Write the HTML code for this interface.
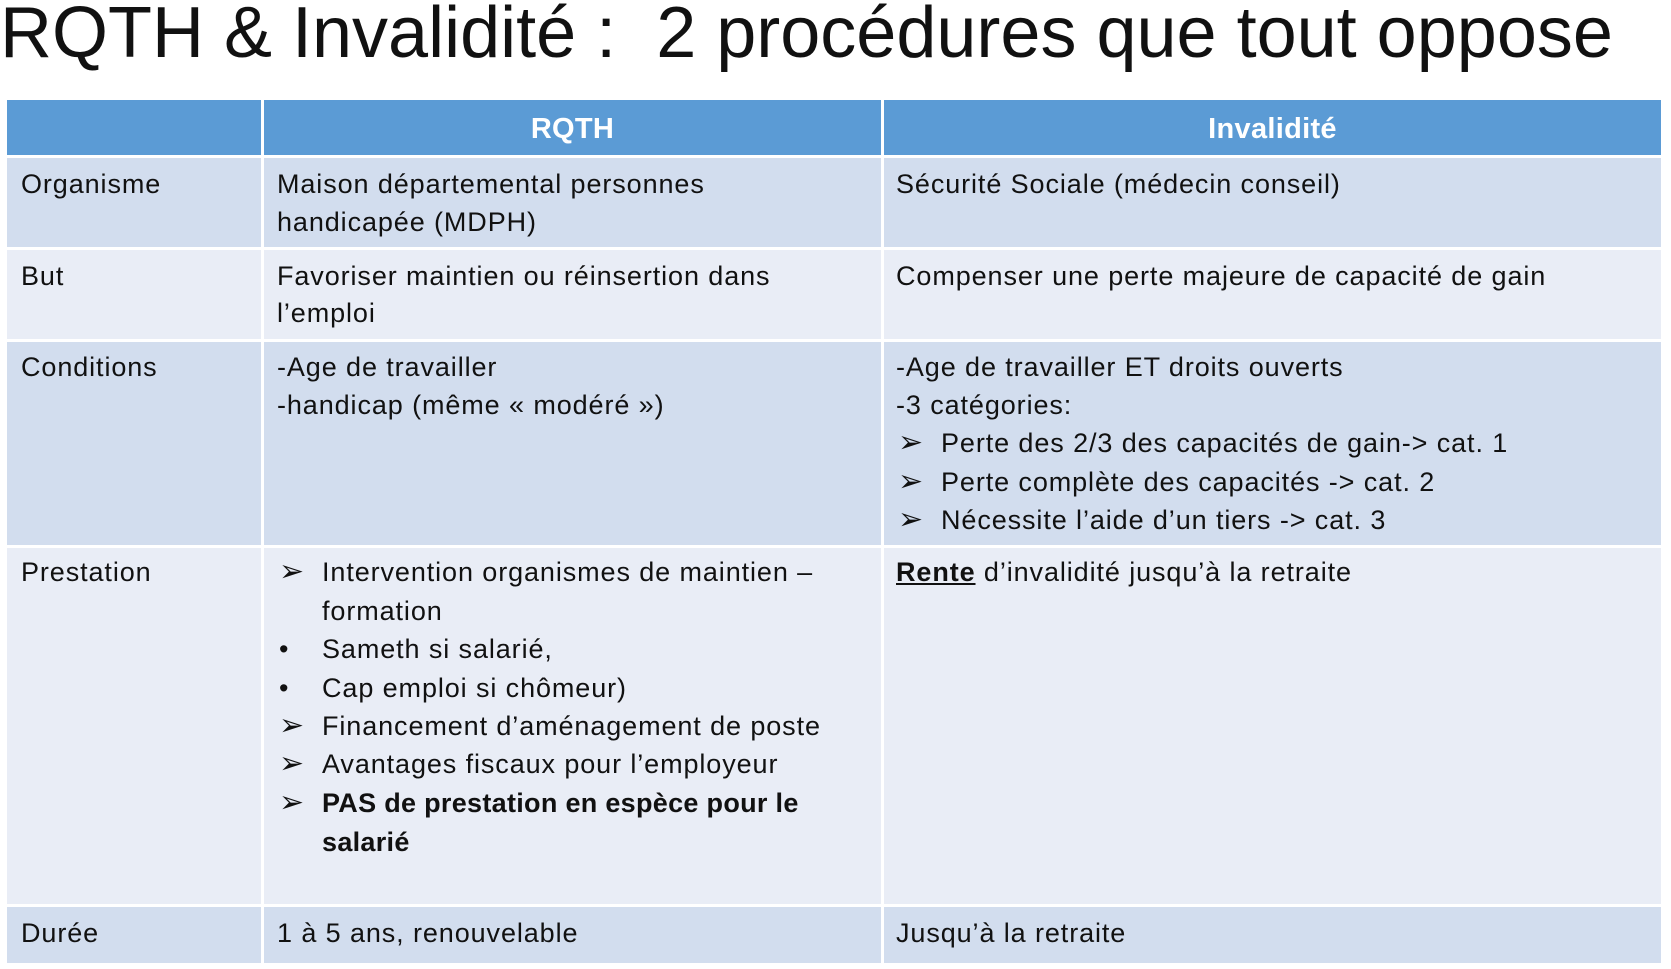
<!DOCTYPE html><html><head><meta charset="utf-8"><style>
body{margin:0;width:1671px;height:969px;background:#fff;position:relative;overflow:hidden;font-family:"Liberation Sans",sans-serif;color:#111}
.t{position:absolute;left:0;top:-12px;font-size:72px;line-height:90px;white-space:nowrap;letter-spacing:0px}
.r{position:absolute}
.l{position:absolute;font-size:27px;line-height:38px;white-space:nowrap;letter-spacing:0.9px}
.h{color:#fff;font-weight:bold;font-size:29px;text-align:center;letter-spacing:0.3px}
.a{font-size:30px;font-family:"DejaVu Sans",sans-serif;letter-spacing:0}
</style></head><body>
<div class="t">RQTH &amp; Invalidité :&nbsp; 2 procédures que tout oppose</div>
<div class="r" style="left:7px;top:100px;width:1654px;height:55px;background:#5b9bd5"></div>
<div class="r" style="left:7px;top:158px;width:1654px;height:89px;background:#d2ddee"></div>
<div class="r" style="left:7px;top:250px;width:1654px;height:89px;background:#e9edf6"></div>
<div class="r" style="left:7px;top:342px;width:1654px;height:203px;background:#d2ddee"></div>
<div class="r" style="left:7px;top:548px;width:1654px;height:356px;background:#e9edf6"></div>
<div class="r" style="left:7px;top:907px;width:1654px;height:56px;background:#d2ddee"></div>
<div class="r" style="left:261px;top:100px;width:3px;height:863px;background:#fff"></div>
<div class="r" style="left:881px;top:100px;width:3px;height:863px;background:#fff"></div>
<div class="l h" style="left:264px;width:617px;top:110px">RQTH</div>
<div class="l h" style="left:884px;width:777px;top:110px">Invalidité</div>

<div class="l" style="left:21px;top:165px">Organisme</div>
<div class="l" style="left:277px;top:165px">Maison départemental personnes</div>
<div class="l" style="left:277px;top:203px">handicapée (MDPH)</div>
<div class="l" style="left:896px;top:165px">Sécurité Sociale (médecin conseil)</div>

<div class="l" style="left:21px;top:257px">But</div>
<div class="l" style="left:277px;top:257px">Favoriser maintien ou réinsertion dans</div>
<div class="l" style="left:277px;top:294px">l’emploi</div>
<div class="l" style="left:896px;top:257px">Compenser une perte majeure de capacité de gain</div>

<div class="l" style="left:21px;top:348px">Conditions</div>
<div class="l" style="left:277px;top:348px">-Age de travailler</div>
<div class="l" style="left:277px;top:386px">-handicap (même « modéré »)</div>
<div class="l" style="left:896px;top:348px">-Age de travailler ET droits ouverts</div>
<div class="l" style="left:896px;top:386px">-3 catégories:</div>
<div class="l a" style="left:898px;top:424px">➢</div><div class="l" style="left:941px;top:424px">Perte des 2/3 des capacités de gain-&gt; cat. 1</div>
<div class="l a" style="left:898px;top:463px">➢</div><div class="l" style="left:941px;top:463px">Perte complète des capacités -&gt; cat. 2</div>
<div class="l a" style="left:898px;top:501px">➢</div><div class="l" style="left:941px;top:501px">Nécessite l’aide d’un tiers -&gt; cat. 3</div>

<div class="l" style="left:21px;top:553px">Prestation</div>
<div class="l a" style="left:279px;top:553px">➢</div><div class="l" style="left:322px;top:553px">Intervention organismes de maintien –</div>
<div class="l" style="left:322px;top:592px">formation</div>
<div class="l" style="left:279px;top:630px">•</div><div class="l" style="left:322px;top:630px">Sameth si salarié,</div>
<div class="l" style="left:279px;top:669px">•</div><div class="l" style="left:322px;top:669px">Cap emploi si chômeur)</div>
<div class="l a" style="left:279px;top:707px">➢</div><div class="l" style="left:322px;top:707px">Financement d’aménagement de poste</div>
<div class="l a" style="left:279px;top:745px">➢</div><div class="l" style="left:322px;top:745px">Avantages fiscaux pour l’employeur</div>
<div class="l a" style="left:279px;top:784px">➢</div><div class="l" style="left:322px;top:784px;font-weight:bold;letter-spacing:0.3px">PAS de prestation en espèce pour le</div>
<div class="l" style="left:322px;top:823px;font-weight:bold;letter-spacing:0.3px">salarié</div>
<div class="l" style="left:896px;top:553px"><b style="text-decoration:underline">Rente</b> d’invalidité jusqu’à la retraite</div>

<div class="l" style="left:21px;top:914px">Durée</div>
<div class="l" style="left:277px;top:914px">1 à 5 ans, renouvelable</div>
<div class="l" style="left:896px;top:914px">Jusqu’à la retraite</div>
</body></html>
